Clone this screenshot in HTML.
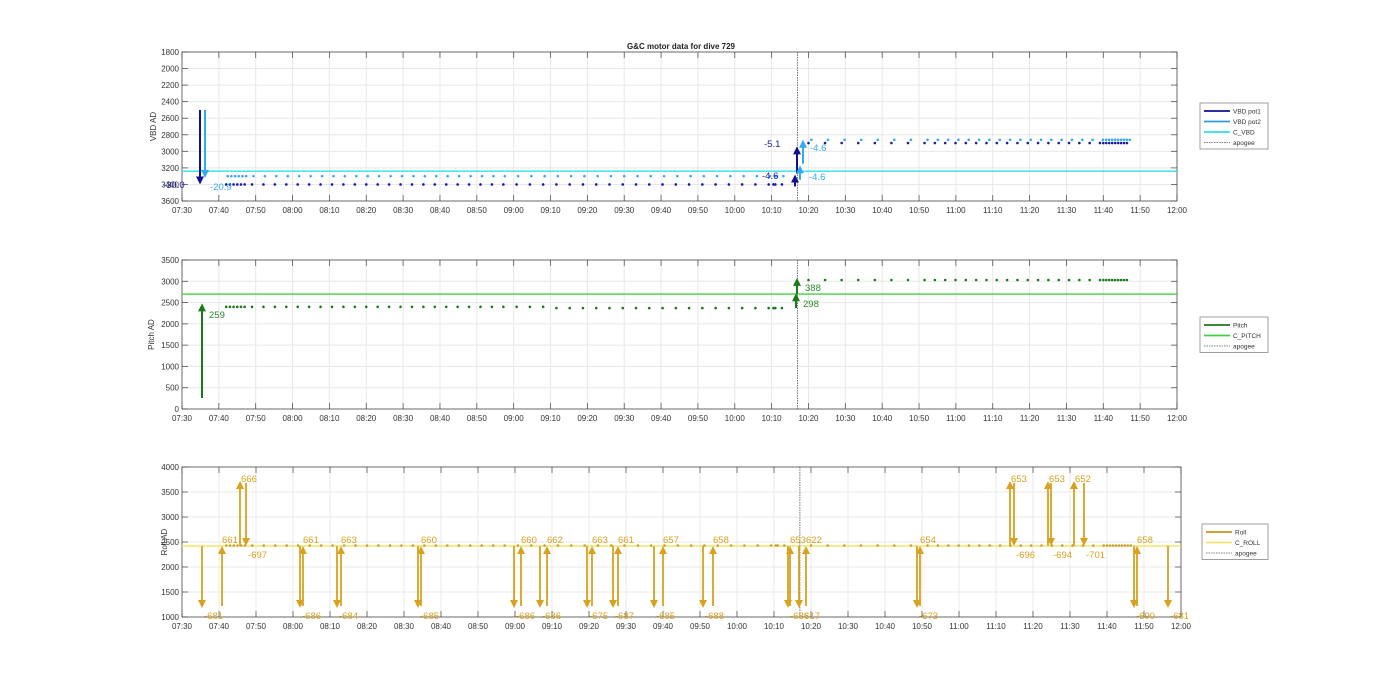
<!DOCTYPE html>
<html><head><meta charset="utf-8">
<style>
html,body{margin:0;padding:0;background:#fff;}
svg{display:block;font-family:"Liberation Sans",Arial,sans-serif;}
</style></head>
<body>
<svg id="s" width="1400" height="693" xmlns="http://www.w3.org/2000/svg">
<text x="681" y="49" font-size="8" font-weight="bold" text-anchor="middle" fill="#222">G&amp;C motor data for dive 729</text>
</svg>
<script>
var S=document.getElementById('s'),NS='http://www.w3.org/2000/svg';
function el(t,a,txt){var e=document.createElementNS(NS,t);for(var k in a)e.setAttribute(k,a[k]);if(txt!=null)e.textContent=txt;S.appendChild(e);return e;}
function pad(n){return (n<10?'0':'')+n;}
function axes(o){
  var L=182,R=o.R,T=o.T,B=o.B;
  o.x=function(m){return L+m/270*(R-L);};
  o.y=function(v){return T+(o.inv?(v-o.y0):(o.y1-v))/(o.y1-o.y0)*(B-T);};
  for(var m=0;m<=270;m+=10){var x=o.x(m);
    if(m>0&&m<270)el('line',{x1:x,y1:T,x2:x,y2:B,stroke:'#e8e8e8','stroke-width':1});
    el('line',{x1:x,y1:T,x2:x,y2:T+6,stroke:'#555','stroke-width':0.8});
    el('line',{x1:x,y1:B,x2:x,y2:B-6,stroke:'#555','stroke-width':0.8});
    var h=7+Math.floor((30+m)/60),mm=(30+m)%60;
    el('text',{x:x,y:B+12,'font-size':8,'text-anchor':'middle',fill:'#333'},pad(h)+':'+pad(mm));}
  for(var v=o.y0;v<=o.y1+0.1;v+=o.dy){var y=o.y(v);
    if(v>o.y0&&v<o.y1)el('line',{x1:L,y1:y,x2:R,y2:y,stroke:'#e8e8e8','stroke-width':1});
    el('line',{x1:L,y1:y,x2:L+6,y2:y,stroke:'#555','stroke-width':0.8});
    el('line',{x1:R,y1:y,x2:R-6,y2:y,stroke:'#555','stroke-width':0.8});
    el('text',{x:L-3,y:y+3,'font-size':8,'text-anchor':'end',fill:'#333'},''+v);}
  el('rect',{x:L,y:T,width:R-L,height:B-T,fill:'none',stroke:'#444','stroke-width':0.8});
  el('text',{transform:'translate('+o.lx+','+((T+B)/2)+') rotate(-90)','font-size':8,'text-anchor':'middle',fill:'#333'},o.lab);
  return o;}
function dots(o,list,c){list.forEach(function(p){el('circle',{cx:o.x(p[0]),cy:o.y(p[1]),r:1.3,fill:c});});}
function arrow(x,y1,y2,c,w){
  el('line',{x1:x,y1:y1,x2:x,y2:y2+(y2<y1?6:-6),stroke:c,'stroke-width':w||1.8});
  var d=y2<y1?1:-1;
  el('polygon',{points:(x-4)+','+(y2+8*d)+' '+(x+4)+','+(y2+8*d)+' '+x+','+y2,fill:c});}
function lbl(x,y,t,c){el('text',{x:x,y:y,'font-size':9.5,fill:c},t);}
function legend(x,y,w,items){
  var h=items.length*10.5+4;
  el('rect',{x:x,y:y,width:w,height:h,fill:'#fff',stroke:'#888','stroke-width':0.8});
  items.forEach(function(it,i){var yy=y+8+i*10.5;
    el('line',{x1:x+4,y1:yy,x2:x+30,y2:yy,stroke:it[1],'stroke-width':it[2]?0.8:1.8,'stroke-dasharray':it[2]?'1.5,1':'none'});
    el('text',{x:x+33,y:yy+2.5,'font-size':6.5,fill:'#333'},it[0]);});}
function apogee(o){var x=o.x(167);el('line',{x1:x,y1:o.T,x2:x,y2:o.B,stroke:'#555','stroke-width':0.8,'stroke-dasharray':'1.5,1'});}
// ---- time lists
var early=[],late=[];
for(var m=12;m<=17;m++)early.push(m);
var t=19;while(t<163){early.push(t);t+=(t>85?3.6:3.1);}
early.push(160.5,161);
t=170;while(t<250){late.push(t);t+=(t>200?2.8:4.5);}
for(t=250;t<=257;t+=0.8)late.push(t);
// ---- plot 1
var p1=axes({R:1177,T:52,B:201,y0:1800,y1:3600,dy:200,inv:true,lx:156,lab:'VBD AD'});
el('line',{x1:182,y1:p1.y(3240),x2:1177,y2:p1.y(3240),stroke:'#2ee0e8','stroke-width':1.3});
dots(p1,early.map(function(m){return [m+0.4,3300];}),'#33aaee');
dots(p1,early.filter(function(m){return m>=12;}).map(function(m){return [m,3400];}),'#1a1aa0');
dots(p1,late.map(function(m){return [m+0.8,2860];}),'#33aaee');
dots(p1,late.map(function(m){return [m,2900];}),'#1a1aa0');
apogee(p1);
arrow(200,110,p1.y(3400),'#101090',2);
arrow(205,110,p1.y(3320),'#33aaee',2);
lbl(163,188,'-30.0','#1a1aa0');lbl(210,190,'-20.9','#33aaee');
arrow(795,p1.y(3400)+2,p1.y(3280),'#101090',2);
arrow(797,p1.y(3270),p1.y(2940),'#101090',2);
arrow(800,p1.y(3320)+2,p1.y(3170),'#33aaee',2);
arrow(803,p1.y(3150),p1.y(2860),'#33aaee',2);
lbl(762,179,'-4.6','#1a1aa0');lbl(764,147,'-5.1','#1a1aa0');
lbl(809,180,'-4.6','#33aaee');lbl(810,151,'-4.6','#33aaee');
legend(1200,103,68,[['VBD pot1','#101090'],['VBD pot2','#3399dd'],['C_VBD','#2ee0e8'],['apogee','#555',1]]);
// ---- plot 2
var p2=axes({R:1177,T:260,B:409,y0:0,y1:3500,dy:500,lx:154,lab:'Pitch AD'});
el('line',{x1:182,y1:p2.y(2700),x2:1177,y2:p2.y(2700),stroke:'#40d040','stroke-width':1.3});
dots(p2,early.map(function(m){return [m,m>100?2370:2400];}),'#1a7a1a');
dots(p2,late.map(function(m){return [m,3030];}),'#1a7a1a');
apogee(p2);
arrow(202,398,p2.y(2480),'#1a7a1a',2);lbl(209,318,'259','#2a8a2a');
arrow(796,p2.y(2370),p2.y(2720),'#1a7a1a',2);
arrow(797,p2.y(2700),p2.y(3080),'#1a7a1a',2);
lbl(803,307,'298','#2a8a2a');lbl(805,291,'388','#2a8a2a');
legend(1200,317,68,[['Pitch','#1a7a1a'],['C_PITCH','#40d040'],['apogee','#555',1]]);
// ---- plot 3
var p3=axes({R:1181,T:467,B:617,y0:1000,y1:4000,dy:500,lx:167,lab:'Roll AD'});
var C='#d9a21e';
el('line',{x1:182,y1:p3.y(2420),x2:1181,y2:p3.y(2420),stroke:'#f3e56a','stroke-width':1.5});
dots(p3,early.concat(late).map(function(m){return [m,2430];}),'#c8a030');
apogee(p3);
var yb=p3.y(2420),yd=608,yt=481;
var ev=[['d',202,'-681'],['u',222,'661'],['U',240,'666'],['D',246,'-697'],
['d',300,'-686'],['u',303,'661'],['d',337,'-684'],['u',341,'663'],['d',418,'-685'],['u',421,'660'],
['d',514,'-686'],['u',521,'660'],['d',540,'-686'],['u',547,'662'],['d',587,'-675'],['u',592,'663'],
['d',613,'-687'],['u',618,'661'],['d',654,'-685'],['u',663,'657'],['d',703,'-688'],['u',713,'658'],
['d',788,'-686'],['u',790,'653'],['d',799,'-617'],['u',806,'622'],['d',917,'-673'],['u',920,'654'],
['U',1010,'653'],['D',1014,'-696'],['U',1048,'653'],['D',1051,'-694'],['U',1074,'652'],['D',1084,'-701'],
['d',1134,'-690'],['u',1137,'658'],['d',1168,'-681']];
ev.forEach(function(e){var x=e[1];
 if(e[0]=='d'){arrow(x,yb,yd,C);lbl(x+2,619,e[2],C);}
 if(e[0]=='u'){arrow(x,yd-2,yb,C);lbl(x,543,e[2],C);}
 if(e[0]=='U'){arrow(x,yb,yt,C);lbl(x+1,482,e[2],C);}
 if(e[0]=='D'){arrow(x,yt+2,yb,C);lbl(x+2,558,e[2],C);}
});
legend(1202,524,66,[['Roll','#c8961e'],['C_ROLL','#f3e56a'],['apogee','#555',1]]);
</script>
</body></html>
